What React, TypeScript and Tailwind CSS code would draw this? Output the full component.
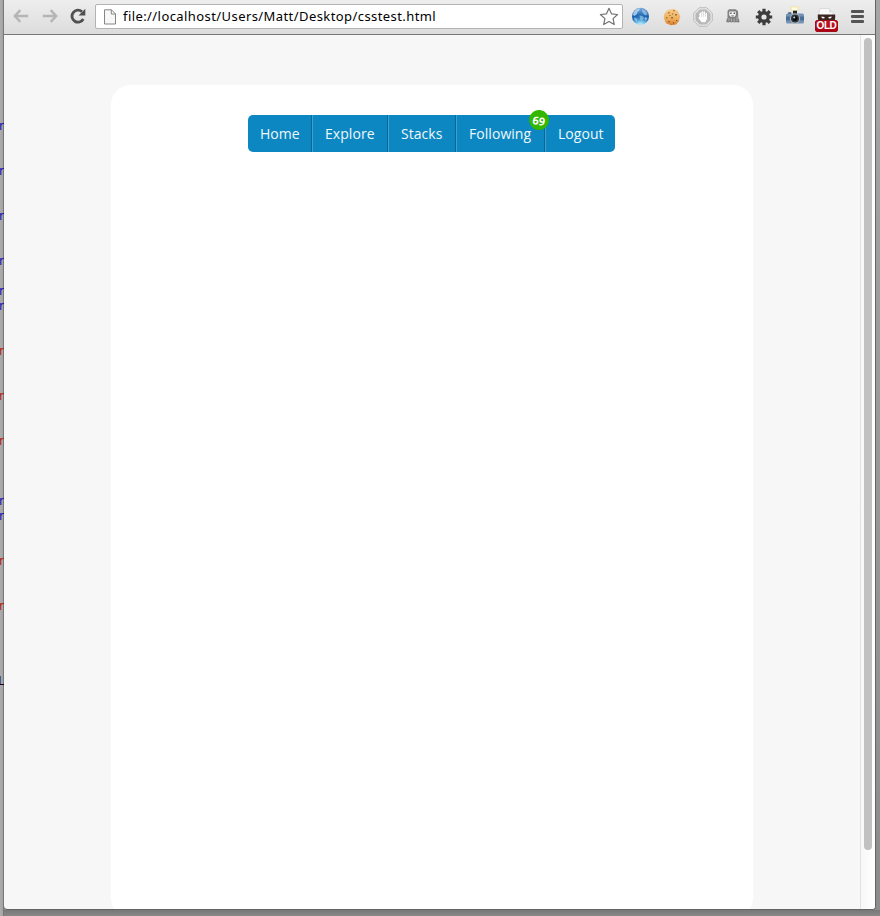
import React from "react";

const B = "text-[#2010b8]";
const R = "text-[#b52411]";
const K = "text-[#200018]";

const codeLines: Record<number, [string, string]> = {
  0: ["r", B], 3: ["r", B], 6: ["r", B], 9: ["r", B], 11: ["r", B], 12: ["r", B],
  15: ["r", R], 18: ["r", R], 21: ["r", R], 25: ["r", B], 26: ["r", B],
  29: ["r", R], 32: ["r", R], 37: ["L", K],
};

function CodeGutter() {
  return (
    <div className="w-1 shrink-0 overflow-hidden bg-[linear-gradient(to_right,#adadad_0px,#a3a3a3_3px,#777_3px,#777_4px)] pt-[119px] font-['DejaVu_Sans_Mono',monospace] text-[12px] leading-[15px]">
      {Array.from({ length: 38 }, (_, i) => (
        <div key={i} className={`-ml-[2px] h-[15px] w-2 ${codeLines[i]?.[1] ?? ""}`}>{codeLines[i]?.[0]}</div>
      ))}
    </div>
  );
}

function Arrow({ flip = false }: { flip?: boolean }) {
  return (
    <svg width="16" height="14" viewBox="0 0 16 14" className={flip ? "rotate-180" : ""} fill="none" stroke="#b5b5b5" strokeWidth="2.4">
      <path d="M7.3 1.2 1.8 7l5.5 5.8M2 7h13.2" />
    </svg>
  );
}

function Reload() {
  return (
    <svg width="16" height="16" viewBox="0 0 16 16">
      <path d="M13.3 11A6 6 0 1 1 12 3.7" fill="none" stroke="#505050" strokeWidth="2.8" />
      <path d="M15.3.8v6.8H8.6z" fill="#505050" />
    </svg>
  );
}

function PageIcon() {
  return (
    <svg width="12" height="16" viewBox="0 0 12 16" fill="#f7f7f7" stroke="#858585">
      <path d="M.5.8h7L11.5 5v10H.5zM7.3.8V5h4.2" />
    </svg>
  );
}

function Star() {
  return (
    <svg width="20" height="19" viewBox="0 0 20 19" fill="#fff" stroke="#727272" strokeWidth="1.2" strokeLinejoin="round">
      <path d="m10 1.3 2.5 5.5 6 .7-4.4 4.1 1.1 6-5.2-3-5.3 3 1.2-6-4.5-4.1 6.1-.7z" />
    </svg>
  );
}

function Globe() {
  return (
    <svg width="19" height="19" viewBox="0 0 19 19">
      <defs>
        <linearGradient id="globe" x1="0" y1="0" x2="0" y2="1">
          <stop stopColor="#7fb0dc" /><stop offset=".5" stopColor="#1a62b0" /><stop offset=".72" stopColor="#1560ad" /><stop offset="1" stopColor="#6fcdf6" />
        </linearGradient>
        <radialGradient id="globeLight" cx=".5" cy="1" r=".6">
          <stop stopColor="#c4f2ff" /><stop offset="1" stopColor="#58b9ee" stopOpacity="0" />
        </radialGradient>
      </defs>
      <circle cx="9.5" cy="9.2" r="8.5" fill="url(#globe)" />
      <path d="M2.5 5.5Q5 1.5 9 1.5L8 4 6.5 5 6 7 3.5 9 2 8z" fill="#c4dff2" opacity=".75" />
      <path d="M11 2.5l3 1 2.5 3.5-1.5 1.5-2-1-1.5-2zM8.5 8.5l3 .5 1.5 2-2 2.5-1.5-.5z" fill="#c4dff2" opacity=".55" />
      <path d="M3 10.5l2 .5 1.5 2-1 1.5-2-1.5zM14 10l2.5 1-1.5 2.5-1.5-1z" fill="#d5ecf8" opacity=".6" />
      <circle cx="9.5" cy="9.2" r="8.5" fill="url(#globeLight)" />
    </svg>
  );
}

function Cookie() {
  return (
    <svg width="18" height="18" viewBox="0 0 18 18">
      <defs>
        <linearGradient id="cookie" x1="0" y1="0" x2="0" y2="1">
          <stop stopColor="#f7cd8b" /><stop offset=".6" stopColor="#eeb060" /><stop offset="1" stopColor="#d97d2d" />
        </linearGradient>
      </defs>
      <path d="M3.5 3 6 1.5l5-.8 4 2.5 2.2 5-1.2 5-3 3.2-5 .8-5-2L.7 10l.6-4z" fill="url(#cookie)" />
      <path d="M5.3 4.3h1.2v1.2H5.3zM10.3 2.3h1.4v1h-1.4zM12.3 6h1.4v1.5h-1.4zM3 9.2h1.4v1H3zM8.3 9h1.5v1.4H8.3zM13 12h1.3v1H13zM5.3 13h1.4v1.2H5.3zM10 14.3h1v1.2h-1zM9 5.4h1v1H9zM6.5 7h1v1h-1z" fill="#80501f" />
    </svg>
  );
}

function StopHand() {
  return (
    <svg width="20" height="20" viewBox="0 0 20 20">
      <path d="M6.2.7h7.6l5.5 5.5v7.6l-5.5 5.5H6.2L.7 13.8V6.2z" fill="#e5e5e5" stroke="#bdbdbd" />
      <path d="M6.8 2.5h6.4l4.3 4.3v6.4l-4.3 4.3H6.8l-4.3-4.3V6.8z" fill="#b8b8b8" />
      <path d="M7.2 10V6.2M9.2 10V4.9M11.2 10V5.1M13.2 11V6.6" stroke="#fff" strokeWidth="1.5" strokeLinecap="round" />
      <path d="M6.4 9.7H14V12l-1.6 3.2H8.8L5.4 11.2l.3-1z" fill="#fff" />
    </svg>
  );
}

function Ghost() {
  return (
    <svg width="14" height="16" viewBox="0 0 14 16">
      <path d="M1.5 3 3 1.2h6.5L12 3l.3 7 1 2.2v2l-1.8.4-1-.7-1.7.7-1.6-.5-1.8.5-1.6-.5-1.6.5-2-.5.4-2.6.9-1.5z" fill="#808080" />
      <path d="M3.2 3.5h6.6V7L8.6 8.8H4.5L3.2 7z" fill="#f4f4f4" />
      <path d="M4.2 4.5h1.4V6H4.2zM7.6 4.5H9V6H7.6zM5.3 7.4h2.6v.8H5.3z" fill="#555" />
      <path d="M3 10v3M5.5 10.5v3M8.2 10.5v3M11 8.5v4.5" stroke="#b3b3b3" strokeWidth=".9" />
    </svg>
  );
}

function Gear() {
  return (
    <svg width="18" height="18" viewBox="0 0 18 18">
      <g stroke="#3d3d3d" strokeWidth="3.2"><path d="M9 .8v16.4M.8 9h16.4M3.2 3.2l11.6 11.6M14.8 3.2 3.2 14.8" /></g>
      <circle cx="9" cy="9" r="6.1" fill="#3d3d3d" />
      <circle cx="9" cy="9" r="2.6" fill="#e6e6e6" />
    </svg>
  );
}

function Camera() {
  return (
    <svg width="20" height="20" viewBox="0 0 20 20">
      <path d="M5.5 1h8l-1.3 3.7H7z" fill="#fffbe0" stroke="#f0dc7c" strokeWidth=".6" />
      <path d="M8 4.7h4V8H8z" fill="#24272a" />
      <rect x="3" y="6.3" width="3.4" height="2" rx=".7" fill="#3f5870" />
      <rect x="1" y="7.6" width="18" height="10" rx="1.5" fill="#7593b5" />
      <path d="M1 10.5h18v4H1z" fill="#4a6f97" />
      <circle cx="10" cy="12.6" r="5.1" fill="#aeb4b9" />
      <circle cx="10" cy="12.6" r="4" fill="#2b3138" />
      <circle cx="10" cy="12.6" r="2.3" fill="#060a0d" />
      <circle cx="9.2" cy="11.5" r="1" fill="#ccd5df" />
    </svg>
  );
}

function OldMask() {
  return (
    <div className="relative h-[24px] w-[23px]">
      <svg width="23" height="15" viewBox="0 0 23 15" className="absolute">
        <path d="M5 .5h9L18 4.5v8H4V5z" fill="#fafafa" stroke="#ccc" strokeWidth=".6" />
        <path d="M14 .5v4h4" fill="#ddd" />
        <path d="M2.8 6.5h17.4v3.3l-.7 4H3.5L2.8 10z" fill="#3c2420" />
        <path d="m6.2 8.5 3.4.6-.3 1.3-2.3-.2zM16.8 8.5l-3.4.6.3 1.3 2.3-.2z" fill="#fff" />
      </svg>
      <div className="absolute bottom-0 left-0 flex h-[12px] w-[23px] items-center justify-center rounded-[2px] border border-[#a20b19] bg-gradient-to-b from-[#c31622] to-[#ad0013] font-['Liberation_Sans',sans-serif] text-[10px] leading-none font-bold tracking-[-0.4px] text-white">OLD</div>
    </div>
  );
}

function Toolbar() {
  return (
    <header className="flex h-[35px] shrink-0 items-start border-b border-[#777] bg-gradient-to-b from-[#eeeeee] to-[#dcdcdc]">
      <div className="mt-[9px] ml-[9px]"><Arrow /></div>
      <div className="mt-[9px] ml-[13px]"><Arrow flip /></div>
      <div className="mt-[8px] ml-[12px]"><Reload /></div>
      <div className="mt-[4px] ml-[9px] flex h-[25px] w-[528px] items-center rounded-[2px] border border-[#b3b3b3] bg-white pr-[3px] pl-[8px]">
        <PageIcon />
        <span className="ml-[7px] grow font-['Noto_Sans','Open_Sans',sans-serif] text-[13px] leading-none font-normal tracking-[0.42px] whitespace-nowrap text-black">file://localhost/Users/Matt/Desktop/csstest.html</span>
        <Star />
      </div>
      <div className="mt-[7px] ml-[8px]"><Globe /></div>
      <div className="mt-[8px] ml-[13px]"><Cookie /></div>
      <div className="mt-[7px] ml-[12px]"><StopHand /></div>
      <div className="mt-[8px] ml-[13px]"><Ghost /></div>
      <div className="mt-[8px] ml-[15px]"><Gear /></div>
      <div className="mt-[6px] ml-[12px]"><Camera /></div>
      <div className="mt-[8px] ml-[10px]"><OldMask /></div>
      <div className="mt-[10px] ml-[13px] flex w-[13px] shrink-0 flex-col gap-[2px]">
        <i className="h-[3px] rounded-[1px] bg-[#555]" />
        <i className="h-[3px] rounded-[1px] bg-[#555]" />
        <i className="h-[3px] rounded-[1px] bg-[#555]" />
      </div>
    </header>
  );
}

const tabs = [
  { label: "Home", width: "w-[64px]" },
  { label: "Explore", width: "w-[76px]" },
  { label: "Stacks", width: "w-[68px]" },
  { label: "Following", width: "w-[89px]", count: 69 },
  { label: "Logout", width: "w-[70px]" },
];

function Navigation() {
  return (
    <nav className="ml-[137px] flex h-[37px] w-[367px] rounded-[5px] bg-[#0d87c1] font-['Open_Sans',sans-serif] text-[14px] tracking-[0.05px] text-[#eef8fc]">
      {tabs.map((tab, i) => (
        <a key={tab.label} className={`${tab.width} relative flex h-[37px] items-center whitespace-nowrap ${i < 4 ? "border-r border-r-[#07679b]" : ""} ${i > 0 ? "border-l border-l-[#3da0cf] pl-[12px]" : "pl-[12px]"}`}>
          {tab.label}
          {tab.count && <span className="absolute -top-[5px] -right-[5px] z-10 flex size-5 rotate-[8deg] items-center justify-center rounded-full bg-[#33b700] text-[11px] leading-none font-bold tracking-normal text-white">{tab.count}</span>}
        </a>
      ))}
    </nav>
  );
}

export default function App() {
  return (
    <div className="flex h-[916px] w-[880px] overflow-hidden bg-[#979797]">
      <CodeGutter />
      <div className="flex min-w-0 grow flex-col bg-gradient-to-b from-[#a6a6a6] to-[#8c8c8c]">
        <main className="flex h-[910px] w-[872px] shrink-0 flex-col overflow-hidden rounded-b-[4px] border-r border-b border-[#646464] bg-[#f7f7f7]">
          <Toolbar />
          <div className="flex min-h-0 grow overflow-hidden">
            <div className="w-[856px] shrink-0 overflow-hidden pt-[50px] pl-[107px]">
              <section className="h-[833px] w-[642px] rounded-[20px] bg-white pt-[30px]"><Navigation /></section>
            </div>
            <div className="w-[15px] border-l border-[#e2e2e2] bg-gradient-to-r from-[#f7f7f7] to-white pt-[3px] pl-[3px]">
              <div className="h-[812px] w-[8px] rounded-full bg-[#c1c1c1]" />
            </div>
          </div>
        </main>
        <div className="h-[6px] bg-gradient-to-b from-[#777] to-[#888]" />
      </div>
    </div>
  );
}
